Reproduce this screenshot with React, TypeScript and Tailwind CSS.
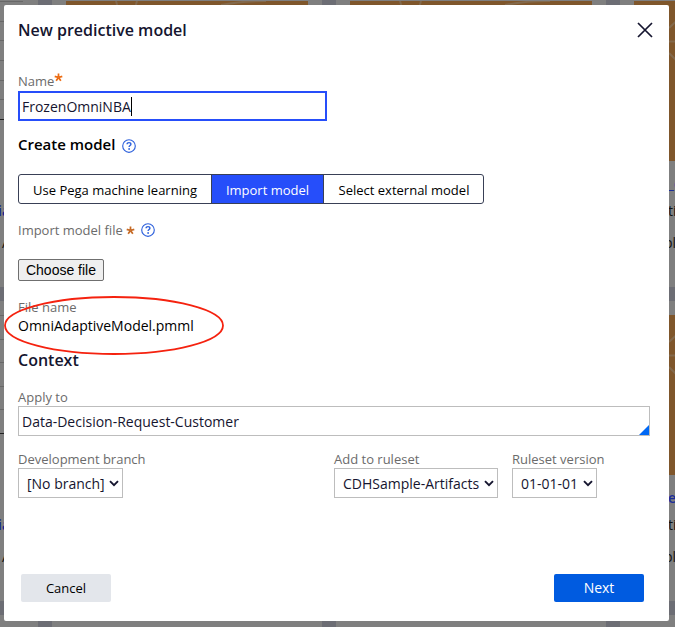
import React from "react";

function HelpIcon() {
  return (
    <svg width="14" height="14" viewBox="0 0 14 14" className="block shrink-0">
      <circle cx="7" cy="7" r="6.3" fill="none" stroke="#2f62dc" strokeWidth="1.15" />
      <path d="M5.1 5.3C5.1 4.2 5.9 3.6 7 3.6s1.9.6 1.9 1.6c0 1.3-1.8 1.4-1.8 2.9" fill="none" stroke="#2f62dc" strokeWidth="1.4" />
      <circle cx="7.1" cy="10" r=".9" fill="#2f62dc" />
    </svg>
  );
}

function Star({ size, color }: { size: number; color: string }) {
  return (
    <svg width={size} height={size} viewBox="0 0 10 10" className="mt-px block shrink-0">
      <path d="M5 5V.6M5 5L.8 3.7M5 5l4.2-1.3M5 5L2.4 8.7M5 5l2.6 3.7" stroke={color} strokeWidth="1.9" fill="none" />
    </svg>
  );
}

function Chevron() {
  return (
    <svg width="10" height="7" viewBox="0 0 10 7" className="block shrink-0">
      <path d="M1 1.2L5 5.2L9 1.2" fill="none" stroke="#15152f" strokeWidth="1.9" />
    </svg>
  );
}

function ChartCard({ lines }: { lines: number[] }) {
  return (
    <div className="h-[300px] w-[270px] shrink-0 bg-[#7f7f7f] p-3.5">
      <div className="flex h-[119px] w-[241px] flex-col justify-between border-b border-[#222]">
        {lines.map((n) => (
          <div key={n} className="h-px bg-[#686868]" />
        ))}
        <div />
      </div>
      <div className="mt-[81px] h-5 pl-[216px] text-[14px] leading-5 font-semibold whitespace-nowrap text-[#18248a]">ia</div>
      <div className="mt-3 pl-[220px] text-[14px] leading-5 text-[#111]">A</div>
    </div>
  );
}

function PictureCard({ link }: { link?: string }) {
  return (
    <div className="h-[300px] w-[270px] shrink-0 overflow-hidden bg-[#7f7f7f] p-3.5">
      <svg width="242" height="160" viewBox="0 0 242 160" className="block">
        <rect width="242" height="160" fill="#7f562b" />
        <g fill="none" stroke="#83694c" strokeWidth="2">
          <path d="M50 0L52 7Q60 14 69 7L71 0M35 40.5H65M35 27L58 5M35 52L58 75" />
          <path d="M155 4Q175 0 200 0" />
        </g>
      </svg>
      {link && (
        <div className="pl-[34px] whitespace-nowrap">
          <div className="mt-[13px] text-[14px] leading-5 font-semibold text-[#1b2c99]">{link}</div>
          <div className="mt-[7px] text-[14px] leading-5 text-[#111]">ti</div>
          <div className="mt-3 -ml-1 text-[14px] leading-5 text-[#111]">pl</div>
        </div>
      )}
    </div>
  );
}

function CardRow({ link, lines }: { link: string; lines: number[] }) {
  return (
    <div className="flex gap-3.5">
      <ChartCard lines={lines} />
      <PictureCard />
      <PictureCard />
      <PictureCard link={link} />
    </div>
  );
}

function Select({ label, value, width, inner }: { label: string; value: string; width: string; inner: string }) {
  return (
    <div className={width}>
      <div className="h-[18px] text-[13px] leading-[18px] whitespace-nowrap text-[#6b6b6b]">{label}</div>
      <div className={"flex h-[30px] items-center justify-between border border-[#bdbdbd] pr-[3px] pl-2 text-[14px] whitespace-nowrap text-[#15152f] " + inner}>
        <span>{value}</span>
        <Chevron />
      </div>
    </div>
  );
}

export default function App() {
  return (
    <div className="relative h-[627px] w-[675px] overflow-hidden bg-[#6c6d74] font-['Open_Sans','Noto_Sans',sans-serif]">
      <div className="-mt-[13px] -ml-[232px] flex w-[1122px] flex-col gap-3.5">
        <CardRow link="_e" lines={[0, 1, 2, 3, 4, 5]} />
        <CardRow link="e" lines={[0, 1, 2, 3, 4]} />
        <CardRow link="e" lines={[0, 1, 2, 3, 4]} />
      </div>

      <div className="absolute top-[5px] left-1 flex h-[616px] w-[665px] flex-col rounded-[2px] bg-white px-3.5">
        <div className="flex h-[50px] items-center justify-between pr-0.5">
          <h1 className="text-[16px] font-semibold text-[#15152f]">New predictive model</h1>
          <svg width="16" height="16" viewBox="0 0 16 16" className="block">
            <path d="M1 1L15 15M15 1L1 15" stroke="#15152f" strokeWidth="1.7" />
          </svg>
        </div>

        <div className="mt-[17px] flex h-[19px] text-[13px] leading-[19px] text-[#6b6b6b]">
          Name
          <Star size={9} color="#ec6b12" />
        </div>
        <div className="flex h-[30px] w-[309px] items-center border-2 border-[#264efa] pl-0.5 text-[14px] text-[#15152f]">
          FrozenOmniNBA
          <span className="h-[19px] w-px bg-black" />
        </div>

        <div className="mt-[15px] flex h-5 items-center gap-[6.5px]">
          <h2 className="-mt-[3px] text-[15px] font-semibold text-black">Create model</h2>
          <HelpIcon />
        </div>
        <div className="mt-[18px] flex h-[30px] w-[466px] overflow-hidden rounded-[3px] border border-[#394056] text-[13px] text-black">
          <div className="flex w-[192px] items-center justify-center pt-[3px]">Use Pega machine learning</div>
          <div className="flex w-[113px] items-center justify-center border-x border-[#394056] bg-[#264efa] pt-[3px] text-white">Import model</div>
          <div className="flex flex-1 items-center justify-center pt-[3px] pl-px">Select external model</div>
        </div>

        <div className="mt-4 flex h-5 items-center text-[13px] text-[#6b6b6b]">
          <span className="mt-0.5 mr-[3.5px]">Import model file</span>
          <Star size={9} color="#c66a25" />
          <span className="w-[5.5px]" />
          <HelpIcon />
        </div>
        <button className="mt-[19px] h-[22px] w-[86px] rounded-[2px] border border-[#6f6f6f] bg-[#efefef] font-['Liberation_Sans',Arial,sans-serif] text-[14px] leading-5 text-black">
          Choose file
        </button>

        <div className="mt-[17px] text-[13px] leading-[18px] text-[#6b6b6b]">File name</div>
        <div className="text-[14px] leading-5 text-black">OmniAdaptiveModel.pmml</div>
        <h2 className="mt-3.5 text-[16px] leading-5 font-semibold text-[#15152f]">Context</h2>

        <div className="mt-[18px] h-[18px] text-[13px] leading-[18px] text-[#6b6b6b]">Apply to</div>
        <div className="flex h-[30px] w-[632px] items-center justify-between border border-[#bdbdbd] pl-[3px] text-[14px] text-[#15152f]">
          Data-Decision-Request-Customer
          <svg width="10" height="10" viewBox="0 0 10 10" className="block self-end">
            <path d="M0 10H10V0Z" fill="#0068f5" />
          </svg>
        </div>

        <div className="mt-3.5 flex">
          <Select label="Development branch" value="[No branch]" width="w-[316px]" inner="w-[105px]" />
          <Select label="Add to ruleset" value="CDHSample-Artifacts" width="w-[178px]" inner="w-[164px]" />
          <Select label="Ruleset version" value="01-01-01" width="w-[100px]" inner="w-[85px]" />
        </div>

        <div className="mt-[76px] flex justify-between pr-[11px] pl-[3px]">
          <button className="h-7 w-[90px] rounded-[2px] bg-[#e3e6eb] pt-0.5 text-[13px] text-black">Cancel</button>
          <button className="h-7 w-[90px] rounded-[2px] bg-[#005be0] pb-0.5 text-[14px] text-white">Next</button>
        </div>
      </div>

      <svg width="220" height="60" viewBox="0 0 220 60" className="absolute top-[296px] left-1">
        <ellipse cx="110" cy="29.5" rx="109" ry="28.5" fill="none" stroke="#f5220f" strokeWidth="1.8" />
      </svg>
    </div>
  );
}
